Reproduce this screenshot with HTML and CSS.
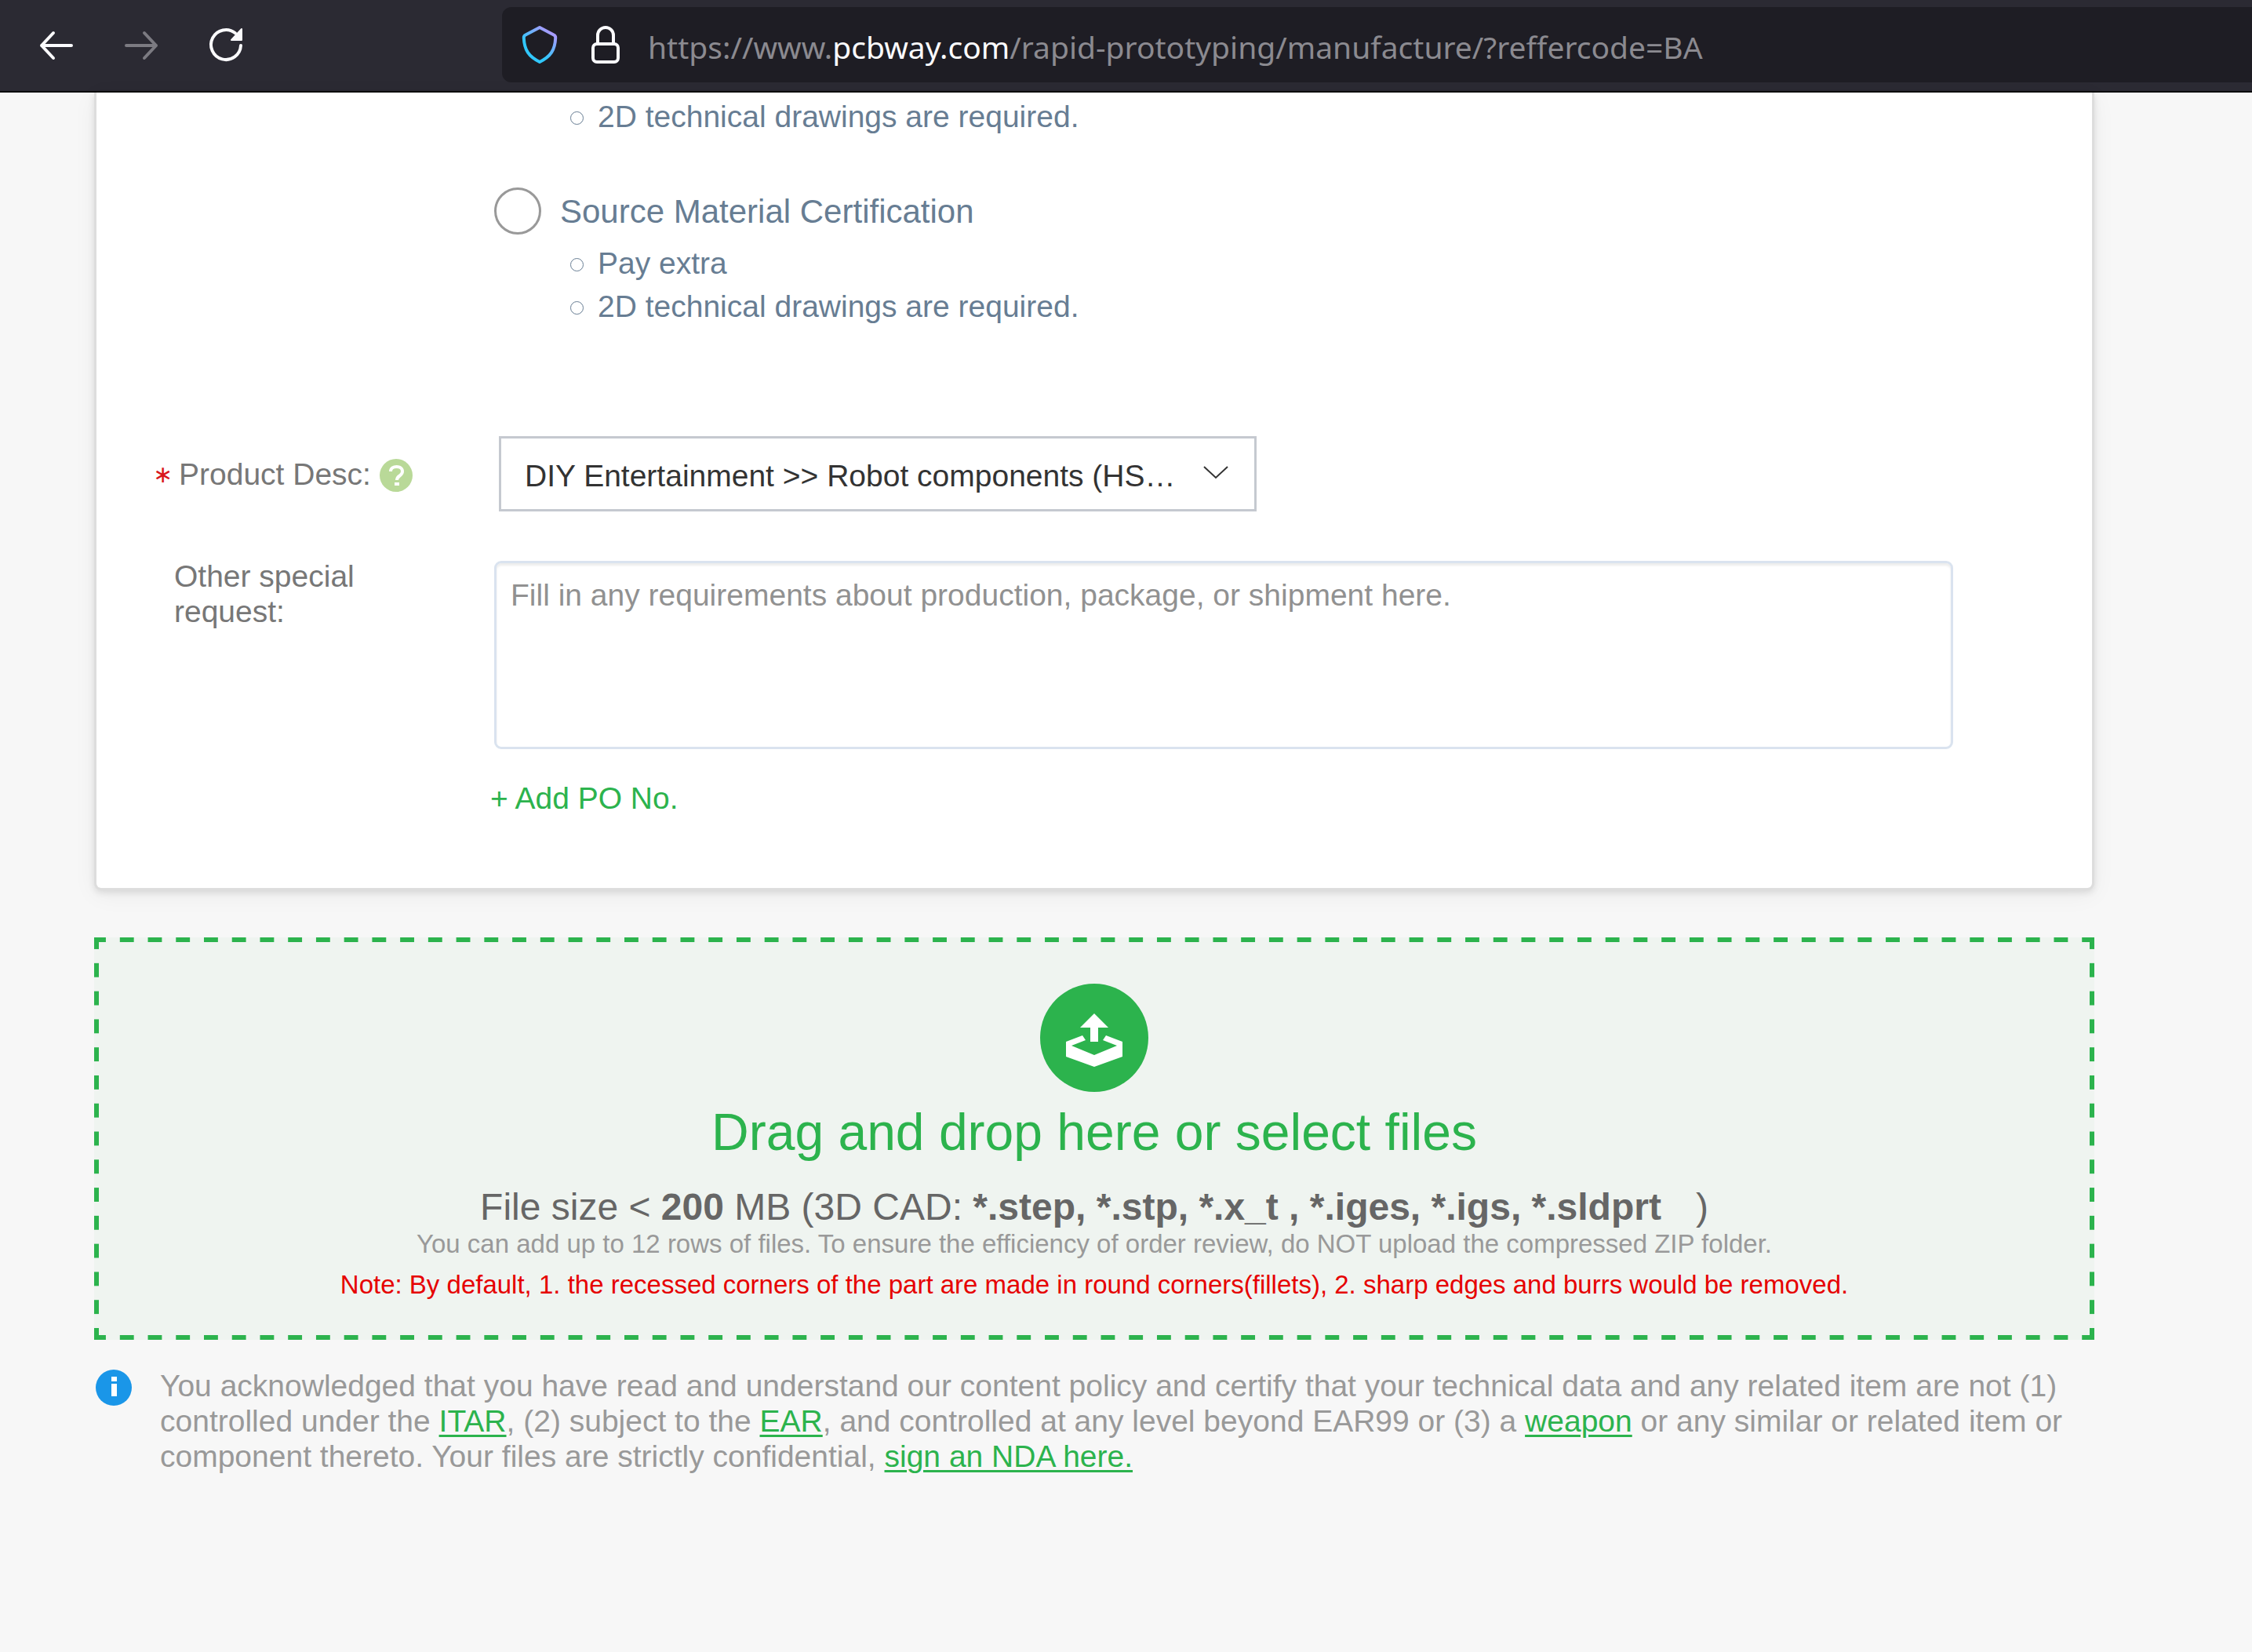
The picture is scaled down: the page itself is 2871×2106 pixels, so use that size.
FILE: index.html
```html
<!DOCTYPE html>
<html lang="en">
<head>
<meta charset="utf-8">
<title>Rapid prototyping</title>
<link rel="stylesheet" href="styles.css">
</head>
<body>
<header class="toolbar">
  <nav class="nav-buttons" aria-label="Browser navigation">
    <button class="nav-button" type="button" aria-label="Back">
      <svg width="48" height="48" viewBox="0 0 48 48" fill="none" stroke="#fbfbfe" stroke-width="4" stroke-linecap="round" stroke-linejoin="round"><path d="M20 9 5 25l15 16M5 25h38"/></svg>
    </button>
    <button class="nav-button" type="button" aria-label="Forward" disabled>
      <svg width="48" height="48" viewBox="0 0 48 48" fill="none" stroke="#7c7b82" stroke-width="4" stroke-linecap="round" stroke-linejoin="round"><path d="m28 9 15 16-15 16M43 25H5"/></svg>
    </button>
    <button class="nav-button" type="button" aria-label="Reload">
      <svg width="48" height="48" viewBox="0 0 48 48" fill="none" stroke="#fbfbfe" stroke-width="4" stroke-linecap="round"><path d="M43 25a19 19 0 1 1-7-15.700"/><path d="M44 4v14H31z" fill="#fbfbfe" stroke="#fbfbfe" stroke-width="2" stroke-linejoin="round"/></svg>
    </button>
  </nav>
  <div class="url-bar">
    <svg width="48" height="54" viewBox="0 0 48 54" fill="none">
      <defs><linearGradient id="shield" x1="0.200" y1="0.900" x2="0.800" y2="0.100"><stop offset="0.300" stop-color="#31c7fb"/><stop offset="1" stop-color="#a99bff"/></linearGradient></defs>
      <path d="M24 5 42 14.500c2 1 2.400 2 2.200 4C43.500 34 38 42 24 49 10 42 4.500 34 3.800 18.500c-.2-2 .2-3 2.200-4z" stroke="url(#shield)" stroke-width="4" stroke-linejoin="round"/>
    </svg>
    <svg width="36" height="48" viewBox="0 0 36 48" fill="none" stroke="#fbfbfe" stroke-width="4"><rect x="2" y="23" width="32" height="23" rx="5"/><path d="M8 23V12a10 10 0 0 1 20 0v11"/></svg>
    <span class="url">https://www.<span class="url-domain">pcbway.com</span>/rapid-prototyping/manufacture/?reffercode=BA</span>
  </div>
</header>

<main class="page">
  <form class="card">
    <ul class="notes">
      <li>2D technical drawings are required.</li>
    </ul>
    <div class="certificate">
      <label class="option"><input class="radio" type="radio" name="certificate">Source Material Certification</label>
      <ul class="notes">
        <li>Pay extra</li>
        <li>2D technical drawings are required.</li>
      </ul>
    </div>
    <div class="row row-product">
      <div class="row-label row-label-required">
        <span class="asterisk">∗</span>
        <label for="product">Product Desc:</label>
        <svg class="help" width="42" height="42" viewBox="0 0 42 42"><circle cx="21" cy="21" r="21" fill="#b9d998"/><path d="M14 16c0-8 15-8 15 0 0 6-7 5-7 11" fill="none" stroke="#fff" stroke-width="4"/><path d="M19 30h6v4h-6z" fill="#fff"/></svg>
      </div>
      <div class="select-wrap">
        <select class="select" id="product"><option>DIY Entertainment &gt;&gt; Robot components (HS…</option></select>
        <svg class="chevron" width="32" height="17" viewBox="0 0 32 17" fill="none" stroke="#333" stroke-width="2"><path d="m1 1 15 14L31 1"/></svg>
      </div>
    </div>
    <div class="row">
      <label class="row-label" for="request">Other special request:</label>
      <textarea class="textarea" id="request" placeholder="Fill in any requirements about production, package, or shipment here."></textarea>
    </div>
    <button class="add-po" type="button">+ Add PO No.</button>
  </form>

  <section class="dropzone">
    <svg class="upload-icon" width="138" height="138" viewBox="0 0 138 138"><circle cx="69" cy="69" r="69" fill="#2cb34d"/><path d="M69 38 87 56H74v18H64V56H51z" fill="#fff"/><path d="m54 66 4 6-18 7 29 12 29-12-18-7 4-6 21 8v19l-36 13-36-13V74z" fill="#fff"/></svg>
    <label class="drop-title">Drag and drop here or select files<input type="file" multiple hidden></label>
    <p class="drop-types">File size &lt; <b>200</b> MB (3D CAD: <b class="extensions">*.step, *.stp, *.x_t , *.iges, *.igs, *.sldprt</b> &nbsp; )</p>
    <p class="drop-hint">You can add up to 12 rows of files. To ensure the efficiency of order review, do NOT upload the compressed ZIP folder.</p>
    <p class="drop-note">Note: By default, 1. the recessed corners of the part are made in round corners(fillets), 2. sharp edges and burrs would be removed.</p>
  </section>

  <section class="policy">
    <svg class="policy-icon" width="46" height="46" viewBox="0 0 46 46"><circle cx="23" cy="23" r="23" fill="#1a96e8"/><path d="M20 9h7v6h-7zM20 18h7v16h-7z" fill="#fff"/></svg>
    <p class="policy-text">You acknowledged that you have read and understand our content policy and certify that your technical data and any related item are not (1) controlled under the <a href="#itar">ITAR</a>, (2) subject to the <a href="#ear">EAR</a>, and controlled at any level beyond EAR99 or (3) a <a href="#weapon">weapon</a> or any similar or related item or component thereto. Your files are strictly confidential, <a href="#nda">sign an NDA here.</a></p>
  </section>
</main>
</body>
</html>
```
FILE: styles.css
```css
* {
  box-sizing: border-box;
}

body {
  margin: 0;
  background: #f7f7f7;
  color: #777;
  font: 39px/45px "Liberation Sans", Arial, sans-serif;
}

svg {
  display: block;
  flex: none;
}

p,
ul {
  margin: 0;
  padding: 0;
}

button,
select,
textarea {
  font: inherit;
}

/* Browser toolbar */
.toolbar {
  display: flex;
  padding: 9px 0 11px 48px;
  background: #2b2a33;
  border-bottom: 2px solid #0c0c0d;
}

.nav-buttons {
  display: flex;
  flex: none;
  align-items: center;
  gap: 60px;
  width: 592px;
}

.nav-button {
  padding: 0;
  border: 0;
  background: none;
}

.url-bar {
  display: flex;
  flex: 1;
  align-items: center;
  height: 96px;
  padding-left: 24px;
  border-radius: 12px 0 0 12px;
  background: #1e1d24;
}

.url-bar svg + svg {
  margin-left: 42px;
}

.url {
  margin-left: 36px;
  padding-top: 4px;
  color: #8b8a90;
  font: 39px/57px "Noto Sans", "Open Sans", sans-serif;
  white-space: nowrap;
}

.url-domain {
  color: #fbfbfe;
}

/* Order form */
.page {
  padding: 0 201px 60px 120px;
}

.card {
  padding: 3px 177px 92px 0;
  border: 3px solid #ddd;
  border-top: 0;
  border-radius: 0 0 9px 9px;
  background: #fff;
  box-shadow: 0 6px 30px rgba(0, 0, 0, 0.05), 0 3px 9px rgba(0, 0, 0, 0.1);
}

.notes {
  padding-left: 604px;
  color: #677d93;
  line-height: 55px;
  list-style: none;
}

.notes li {
  display: flex;
  align-items: center;
  gap: 18px;
}

.notes li::before {
  width: 15px;
  height: 15px;
  margin-top: 3px;
  border: 1px solid;
  border-radius: 50%;
  content: "";
}

.certificate {
  margin-top: 63px;
}

.option {
  display: flex;
  align-items: center;
  gap: 24px;
  margin-bottom: 9px;
  padding-left: 507px;
  color: #677d93;
  font-size: 42px;
}

.radio {
  width: 60px;
  height: 60px;
  margin: 0;
  border: 3px solid #999;
  border-radius: 50%;
  appearance: none;
}

.row {
  display: grid;
  grid-template-columns: 507px 1fr;
  margin-top: 60px;
}

.row-product {
  align-items: center;
  margin-top: 138px;
}

.row-label {
  padding: 0 150px 0 99px;
}

.row-label-required {
  display: flex;
  align-items: center;
  gap: 8px;
  padding: 0 0 0 72px;
  white-space: nowrap;
}

.asterisk {
  width: 25px;
  color: #d9161c;
  font-size: 30px;
  font-family: "DejaVu Sans", sans-serif;
}

.help {
  margin: 3px 0 0 3px;
}

.select-wrap {
  position: relative;
  width: 966px;
  margin-left: 6px;
}

.select {
  display: block;
  width: 100%;
  height: 96px;
  padding: 4px 84px 0 30px;
  border: 3px solid #c5c9d0;
  border-radius: 0;
  background: #fff;
  color: #333;
  appearance: none;
}

.chevron {
  position: absolute;
  top: 38px;
  right: 36px;
  pointer-events: none;
}

.textarea {
  display: block;
  width: 100%;
  height: 240px;
  margin-top: 3px;
  padding: 18px;
  border: 3px solid #dae3ef;
  border-radius: 9px;
  background: #fff;
  box-shadow: inset 0 3px 3px rgba(0, 0, 0, 0.075);
  color: #333;
  resize: none;
}

.textarea::placeholder {
  color: #919191;
}

.add-po {
  display: block;
  margin: 40px 0 0 502px;
  padding: 0;
  border: 0;
  background: none;
  color: #2cb34d;
}

/* Upload area: long dashes drawn on the four edges */
.dropzone {
  --dash-x: linear-gradient(90deg, #2cb34d 25%, transparent 25% 75%, #2cb34d 75%);
  --dash-y: linear-gradient(#2cb34d 25%, transparent 25% 75%, #2cb34d 75%);
  display: flex;
  flex-direction: column;
  align-items: center;
  margin-top: 60px;
  padding: 53px 0 45px;
  border: 6px solid transparent;
  background-color: #eff4f0;
  background-image: var(--dash-x), var(--dash-x), var(--dash-y), var(--dash-y);
  background-position: 0 -6px, 0 calc(100% + 6px), -6px 0, calc(100% + 6px) 0;
  background-repeat: round no-repeat, round no-repeat, no-repeat round, no-repeat round;
  background-size: 36px 6px, 36px 6px, 6px 36px, 6px 36px;
  background-clip: border-box;
  text-align: center;
}

.drop-title {
  margin-top: 13px;
  color: #2cb34d;
  font-size: 66px;
  line-height: 76px;
}

.drop-types {
  margin-top: 30px;
  color: #666;
  font-size: 48px;
  line-height: 56px;
}

.extensions {
  margin-right: 4px;
}

.drop-hint,
.drop-note {
  color: #999;
  font-size: 33px;
  line-height: 38px;
}

.drop-note {
  margin-top: 14px;
  color: #e60000;
}

/* Content policy */
.policy {
  display: flex;
  gap: 36px;
  margin-top: 36px;
  padding: 0 33px 0 2px;
  color: #999;
}

.policy-icon {
  margin-top: 2px;
}

.policy-text a {
  color: #2cb34d;
  text-decoration-thickness: 3px;
  text-underline-offset: 4px;
}
```
